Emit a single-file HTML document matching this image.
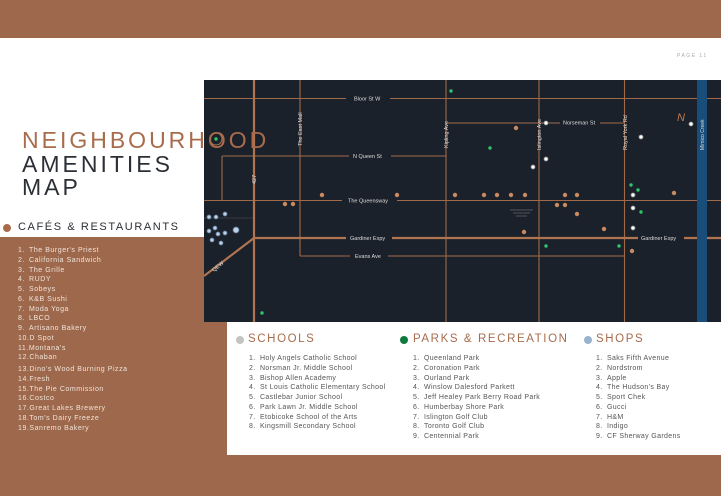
<!DOCTYPE html>
<html><head><meta charset="utf-8"><style>
*{margin:0;padding:0;box-sizing:border-box}
body{width:721px;height:496px;position:relative;overflow:hidden;background:#fff;font-family:"Liberation Sans",sans-serif}
.brown{background:#9d684b;position:absolute}
.t{position:absolute;white-space:nowrap}
.h1{font-size:23px;letter-spacing:3px;color:#2b2f36;font-weight:300;left:22px}
.list{position:absolute;font-size:7px;line-height:9.75px;white-space:nowrap;letter-spacing:.35px}
.list div span{display:inline-block;width:11px}
.hd{position:absolute;font-size:11.5px;letter-spacing:1.6px;color:#a86c4c;white-space:nowrap}
.dot{position:absolute;width:8px;height:8px;border-radius:50%}
</style></head><body>
<div class="brown" style="left:0;top:0;width:721px;height:38px"></div>
<div class="brown" style="left:0;top:237px;width:227px;height:259px"></div>
<div class="brown" style="left:0;top:455px;width:721px;height:41px"></div>
<div class="t" style="left:677px;top:53px;font-size:5px;letter-spacing:1.5px;color:#aaa">PAGE 11</div>

<svg style="position:absolute;left:204px;top:80px" width="517" height="242" viewBox="204 80 517 242">
<rect x="204" y="80" width="517" height="242" fill="#1b212a"/>
<g stroke="#a06a4a" stroke-width="1.1" fill="none">
<line x1="204" y1="98.5" x2="721" y2="98.5"/>
<line x1="448" y1="123" x2="625" y2="123"/>
<line x1="222" y1="156" x2="446" y2="156"/>
<line x1="222" y1="156" x2="222" y2="200"/>
<line x1="204" y1="200.5" x2="721" y2="200.5"/>
<line x1="300" y1="256" x2="625" y2="256"/>
<line x1="300" y1="80" x2="300" y2="256"/>
<line x1="446" y1="80" x2="446" y2="322"/>
<line x1="539" y1="80" x2="539" y2="322"/>
<line x1="624.5" y1="80" x2="624.5" y2="322"/>
<line x1="204" y1="218" x2="254" y2="218" stroke="#555" stroke-width=".6"/>
</g>
<g stroke="#b07450" stroke-width="2.2" fill="none">
<line x1="254" y1="80" x2="254" y2="322"/>
<line x1="254" y1="238" x2="721" y2="238"/>
<line x1="254" y1="238" x2="204" y2="276"/>
</g>
<rect x="697" y="80" width="10" height="242" fill="#1a4e7a"/>
<g font-size="5.5" fill="#ddd" font-family="Liberation Sans">
<rect x="346" y="94" width="44" height="9" fill="#1b212a"/><text x="354" y="100.5">Bloor St W</text>
<rect x="349" y="152" width="42" height="9" fill="#1b212a"/><text x="353" y="158">N Queen St</text>
<rect x="342" y="196" width="55" height="9" fill="#1b212a"/><text x="348" y="202.5">The Queensway</text>
<rect x="346" y="234" width="46" height="9" fill="#1b212a"/><text x="350" y="240">Gardiner Expy</text>
<rect x="638" y="234" width="46" height="9" fill="#1b212a"/><text x="641" y="240">Gardiner Expy</text>
<rect x="350" y="251" width="38" height="9" fill="#1b212a"/><text x="355" y="258">Evans Ave</text>
<rect x="560" y="118" width="40" height="9" fill="#1b212a"/><text x="563" y="124.5">Norseman St</text>
<text transform="translate(302,146) rotate(-90)">The East Mall</text>
<text transform="translate(448,148) rotate(-90)">Kipling Ave</text>
<text transform="translate(541,150) rotate(-90)">Islington Ave</text>
<text transform="translate(627,150) rotate(-90)">Royal York Rd</text>
<text transform="translate(704,150) rotate(-90)" font-size="5">Mimico Creek</text>
<text transform="translate(256,184) rotate(-90)">427</text>
<text transform="translate(214,272) rotate(-40)">QEW</text>
</g>
<text x="677" y="121" font-size="11" fill="#c07a50" font-style="italic">N</text>
<g fill="#c98a60">
<circle cx="322" cy="195" r="2.2"/><circle cx="397" cy="195" r="2.2"/><circle cx="455" cy="195" r="2.2"/><circle cx="484" cy="195" r="2.2"/><circle cx="497" cy="195" r="2.2"/><circle cx="511" cy="195" r="2.2"/><circle cx="525" cy="195" r="2.2"/><circle cx="565" cy="195" r="2.2"/><circle cx="577" cy="195" r="2.2"/><circle cx="674" cy="193" r="2.2"/><circle cx="285" cy="204" r="2.2"/><circle cx="293" cy="204" r="2.2"/><circle cx="557" cy="205" r="2.2"/><circle cx="565" cy="205" r="2.2"/><circle cx="577" cy="214" r="2.2"/><circle cx="604" cy="229" r="2.2"/><circle cx="524" cy="232" r="2.2"/><circle cx="632" cy="251" r="2.2"/><circle cx="516" cy="128" r="2.2"/>
</g>
<g fill="#2fc46a">
<circle cx="451" cy="91" r="1.7"/><circle cx="490" cy="148" r="1.7"/><circle cx="216" cy="139" r="1.7"/><circle cx="631" cy="185" r="1.7"/><circle cx="638" cy="190" r="1.7"/><circle cx="641" cy="212" r="1.7"/><circle cx="546" cy="246" r="1.7"/><circle cx="619" cy="246" r="1.7"/><circle cx="262" cy="313" r="1.7"/>
</g>
<circle cx="216" cy="139" r="6" fill="none" stroke="#b07450" stroke-width="1"/>
<g fill="#fff" stroke="#888" stroke-width=".8">
<circle cx="546" cy="123" r="2"/><circle cx="641" cy="137" r="2"/><circle cx="546" cy="159" r="2"/><circle cx="533" cy="167" r="2"/><circle cx="633" cy="195" r="2"/><circle cx="633" cy="208" r="2"/><circle cx="633" cy="228" r="2"/><circle cx="691" cy="124" r="2"/>
</g>
<g fill="#bcd0e6" stroke="#5b7490" stroke-width=".8">
<circle cx="209" cy="217" r="2"/><circle cx="216" cy="217" r="2"/><circle cx="225" cy="214" r="2"/><circle cx="209" cy="231" r="2"/><circle cx="215" cy="228" r="2"/><circle cx="218" cy="234" r="2"/><circle cx="225" cy="233" r="2"/><circle cx="212" cy="240" r="2"/><circle cx="221" cy="243" r="2"/><circle cx="236" cy="230" r="3"/>
</g>
<g stroke="#888" stroke-width=".5"><line x1="510" y1="210" x2="533" y2="210"/><line x1="513" y1="213" x2="530" y2="213"/><line x1="516" y1="216" x2="527" y2="216"/></g>
</svg>

<div class="t h1" style="top:127px;color:#a86c4c">NEIGHBOURHOOD</div>
<div class="t h1" style="top:151px">AMENITIES</div>
<div class="t h1" style="top:174px">MAP</div>
<div class="dot" style="left:3px;top:224px;background:#a86c4c"></div>
<div class="hd" style="left:18px;top:221px;color:#2b2f36;font-size:11px;letter-spacing:1.6px">CAFÉS &amp; RESTAURANTS</div>
<div class="list" style="left:18px;top:246px;color:#f1e4da;letter-spacing:.55px">
<div><span>1.</span>The Burger's Priest</div><div><span>2.</span>California Sandwich</div><div><span>3.</span>The Grille</div><div><span>4.</span>RUDY</div><div><span>5.</span>Sobeys</div><div><span>6.</span>K&amp;B Sushi</div><div><span>7.</span>Moda Yoga</div><div><span>8.</span>LBCO</div><div><span>9.</span>Artisano Bakery</div><div>10.D Spot</div><div>11.Montana's</div><div>12.Chaban</div><div style="margin-top:2px">13.Dino's Wood Burning Pizza</div><div>14.Fresh</div><div>15.The Pie Commission</div><div>16.Costco</div><div>17.Great Lakes Brewery</div><div>18.Tom's Dairy Freeze</div><div>19.Sanremo Bakery</div>
</div>

<div style="position:absolute;left:227px;top:322px;width:494px;height:133px;background:#fff"></div>
<div class="dot" style="left:236px;top:336px;background:#c4c4c4"></div>
<div class="hd" style="left:248px;top:333px">SCHOOLS</div>
<div class="dot" style="left:400px;top:336px;background:#0f7a3e"></div>
<div class="hd" style="left:413px;top:333px">PARKS &amp; RECREATION</div>
<div class="dot" style="left:584px;top:336px;background:#98b2cf"></div>
<div class="hd" style="left:596px;top:333px">SHOPS</div>
<div class="list" style="left:249px;top:354px;color:#555">
<div><span>1.</span>Holy Angels Catholic School</div><div><span>2.</span>Norsman Jr. Middle School</div><div><span>3.</span>Bishop Allen Academy</div><div><span>4.</span>St Louis Catholic Elementary School</div><div><span>5.</span>Castlebar Junior School</div><div><span>6.</span>Park Lawn Jr. Middle School</div><div><span>7.</span>Etobicoke School of the Arts</div><div><span>8.</span>Kingsmill Secondary School</div>
</div>
<div class="list" style="left:413px;top:354px;color:#555">
<div><span>1.</span>Queenland Park</div><div><span>2.</span>Coronation Park</div><div><span>3.</span>Ourland Park</div><div><span>4.</span>Winslow Dalesford Parkett</div><div><span>5.</span>Jeff Healey Park Berry Road Park</div><div><span>6.</span>Humberbay Shore Park</div><div><span>7.</span>Islington Golf Club</div><div><span>8.</span>Toronto Golf Club</div><div><span>9.</span>Centennial Park</div>
</div>
<div class="list" style="left:596px;top:354px;color:#555">
<div><span>1.</span>Saks Fifth Avenue</div><div><span>2.</span>Nordstrom</div><div><span>3.</span>Apple</div><div><span>4.</span>The Hudson's Bay</div><div><span>5.</span>Sport Chek</div><div><span>6.</span>Gucci</div><div><span>7.</span>H&amp;M</div><div><span>8.</span>Indigo</div><div><span>9.</span>CF Sherway Gardens</div>
</div>
</body></html>
